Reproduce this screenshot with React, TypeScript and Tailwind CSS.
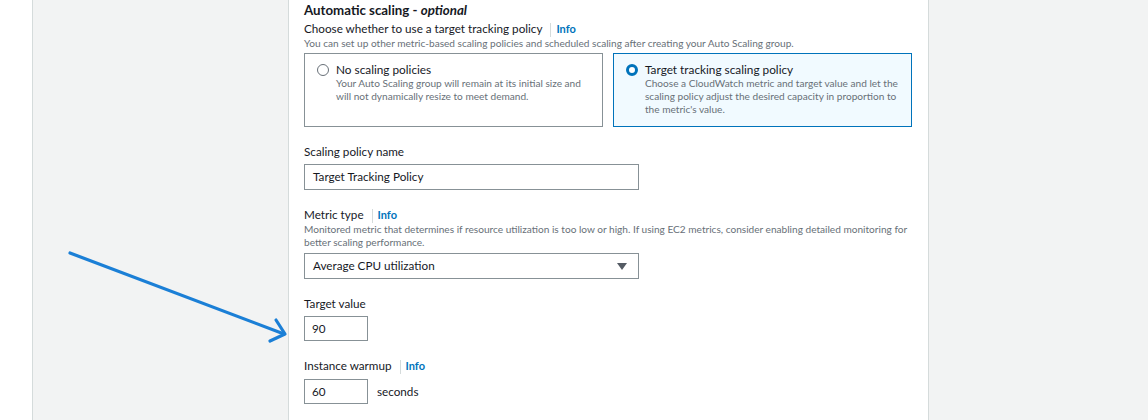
import React from "react";

function Info() {
  return (
    <>
      <span className="ml-[8px] mr-[5px] inline-block h-[14px] w-px bg-[#d5dbdb] align-middle" />
      <span className="font-bold text-[#0073bb] text-[11px]">Info</span>
    </>
  );
}

function RadioCard({
  selected,
  title,
  lines,
}: {
  selected?: boolean;
  title: string;
  lines: string[];
}) {
  return (
    <div
      className={
        selected
          ? "flex-1 h-[74px] border border-[#0073bb] bg-[#f1faff] pl-[12px] pt-[8px]"
          : "flex-1 h-[74px] border border-[#879196] bg-white pl-[12px] pt-[8px]"
      }
    >
      <div className="flex gap-[7px]">
        {selected ? (
          <span className="mt-[2px] h-[12px] w-[12px] shrink-0 rounded-full border-[3.5px] border-[#0073bb] bg-white" />
        ) : (
          <span className="mt-[2px] h-[12px] w-[12px] shrink-0 rounded-full border border-[#687078] bg-white" />
        )}
        <div className="whitespace-nowrap">
          <div className="text-[11.8px] leading-[15px] text-[#16191f]">{title}</div>
          {lines.map((l) => (
            <div key={l} className="text-[10.1px] leading-[13px] text-[#687078]">
              {l}
            </div>
          ))}
        </div>
      </div>
    </div>
  );
}

export default function App() {
  return (
    <div
      className="relative flex h-[420px] w-[1148px] overflow-hidden bg-white"
      style={{ fontFamily: 'Lato, "Liberation Sans", sans-serif' }}
    >
      <div className="w-[32px] shrink-0 bg-white" />
      <div className="w-[256px] shrink-0 border-l border-[#d5dbdb] bg-[#f2f3f3]" />
      <div className="w-[641px] shrink-0 border-l border-r border-[#d5dbdb] bg-white px-[15px] pt-[2px]">
        <h2 className="text-[13.3px] font-bold leading-[17px] text-[#16191f]">
          Automatic scaling - <i>optional</i>
        </h2>
        <div className="mt-[2px] text-[11.7px] leading-[15px] text-[#16191f]">
          Choose whether to use a target tracking policy
          <Info />
        </div>
        <div className="whitespace-nowrap text-[10.1px] leading-[13px] text-[#687078]">
          You can set up other metric-based scaling policies and scheduled scaling after creating your
          Auto Scaling group.
        </div>
        <div className="mt-[3px] flex w-[608px] gap-[10px]">
          <RadioCard
            title="No scaling policies"
            lines={[
              "Your Auto Scaling group will remain at its initial size and",
              "will not dynamically resize to meet demand.",
            ]}
          />
          <RadioCard
            selected
            title="Target tracking scaling policy"
            lines={[
              "Choose a CloudWatch metric and target value and let the",
              "scaling policy adjust the desired capacity in proportion to",
              "the metric's value.",
            ]}
          />
        </div>

        <div className="mt-[17px] text-[11.7px] leading-[15px] text-[#16191f]">Scaling policy name</div>
        <div className="mt-[5px] flex h-[26px] w-[335px] items-center border border-[#879196] px-[8px] text-[11.7px] text-[#16191f]">
          Target Tracking Policy
        </div>

        <div className="mt-[17px] text-[11.7px] leading-[15px] text-[#16191f]">
          Metric type
          <Info />
        </div>
        <div className="whitespace-nowrap text-[10.1px] leading-[13px] text-[#687078]">
          Monitored metric that determines if resource utilization is too low or high. If using EC2 metrics,
          consider enabling detailed monitoring for
          <br />
          better scaling performance.
        </div>
        <div className="mt-[4px] flex h-[26px] w-[335px] items-center justify-between border border-[#879196] px-[8px] text-[11.7px] text-[#16191f]">
          <span>Average CPU utilization</span>
          <span className="mr-[3px] h-0 w-0 border-l-[5px] border-r-[5px] border-t-[7px] border-l-transparent border-r-transparent border-t-[#545b64]" />
        </div>

        <div className="mt-[17px] text-[11.7px] leading-[15px] text-[#16191f]">Target value</div>
        <div className="mt-[5px] flex h-[25px] w-[64px] items-center border border-[#879196] px-[7px] text-[11.7px] text-[#16191f]">
          90
        </div>

        <div className="mt-[17px] text-[11.7px] leading-[15px] text-[#16191f]">
          Instance warmup
          <Info />
        </div>
        <div className="mt-[5px] flex items-center gap-[9px]">
          <div className="flex h-[25px] w-[64px] items-center border border-[#879196] px-[7px] text-[11.7px] text-[#16191f]">
            60
          </div>
          <span className="text-[11.7px] text-[#16191f]">seconds</span>
        </div>
      </div>
      <div className="flex-1 bg-[#f2f3f3]" />

      {/* annotation arrow */}
      <svg className="absolute left-0 top-0" width="1148" height="420" viewBox="0 0 1148 420">
        <g stroke="#1b7fd6" strokeWidth="3.2" strokeLinecap="round" fill="none">
          <line x1="70" y1="253" x2="284" y2="334" />
          <polyline points="276,320 285,334 270,341" strokeLinejoin="round" />
        </g>
      </svg>
    </div>
  );
}
